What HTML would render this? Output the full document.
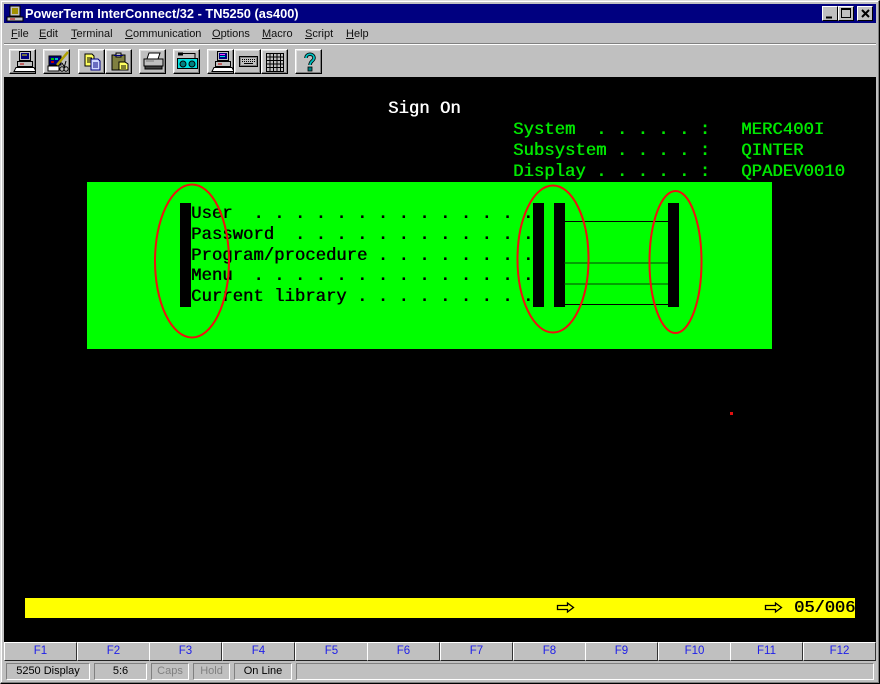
<!DOCTYPE html>
<html>
<head>
<meta charset="utf-8">
<style>
html,body{margin:0;padding:0}
body{width:880px;height:684px;overflow:hidden;background:#c0c0c0;position:relative;font-family:"Liberation Sans",sans-serif}
div{position:absolute;box-sizing:border-box}
.t{font-family:"Liberation Mono",monospace;font-size:17.3px;line-height:20px;white-space:pre;font-weight:normal}
.g{color:#00e800;text-shadow:.5px 0 0 #00e800}
.k{color:#000;text-shadow:.5px 0 0 #000}
.m{font-size:11px;line-height:14px;top:27px;color:#111;white-space:pre}
.b{top:49px;height:25px;background:#c0c0c0;border:1px solid;border-color:#fff #000 #000 #fff;box-shadow:inset -1px -1px 0 #808080,inset 1px 1px 0 #dfdfdf}
.b svg{position:absolute;left:1px;top:0}
.f{top:642px;height:19px;width:73px;background:#c0c0c0;border:1px solid;border-color:#fff #333 #222 #fff;color:#2020e8;font-size:11.5px;line-height:17px;text-align:center}
.s{top:663px;height:17px;border:1px solid;border-color:#808080 #fff #fff #808080;font-size:11px;line-height:15px;text-align:center;color:#000;white-space:pre;background:#c0c0c0}
.w{top:6px;width:16px;height:15px;background:#c0c0c0;border:1px solid;border-color:#fff #000 #000 #fff}
</style>
</head>
<body>
<div style="left:0;top:0;width:880px;height:684px;border:1px solid;border-color:#dfdfdf #000 #000 #dfdfdf;box-shadow:inset -1px -1px 0 #808080,inset 1px 1px 0 #fff"></div>

<div style="left:4px;top:4px;width:872px;height:19px;background:#000080"></div>
<svg style="position:absolute;left:6px;top:5px" width="18" height="17" viewBox="0 0 18 17"><path d="M4 1h10v10H4z" fill="#c0c0c0" stroke="#000"/><path d="M6 3h6v6H6z" fill="#a09000"/><path d="M1 12h16v4H1z" fill="#c0c0c0" stroke="#000"/><path d="M4 14h5" stroke="#c00000"/></svg>
<div style="left:25px;top:5px;color:#fff;font-weight:bold;font-size:12.8px;line-height:17px;white-space:pre">PowerTerm InterConnect/32 - TN5250 (as400)</div>
<div class="w" style="left:822px"><svg style="position:absolute;left:3px;top:2px" width="10" height="10"><path d="M0 8.500h6" stroke="#000" stroke-width="2"/></svg></div>
<div class="w" style="left:838px"><svg style="position:absolute;left:2px;top:1px" width="11" height="11"><path d="M.5.5h9v9h-9zM.5 1.500h9" fill="none" stroke="#000"/></svg></div>
<div class="w" style="left:857px"><svg style="position:absolute;left:3px;top:2px" width="10" height="10"><path d="M1 1l7 7M8 1l-7 7" stroke="#000" stroke-width="2"/></svg></div>

<div class="m" style="left:11px"><u>F</u>ile</div>
<div class="m" style="left:39px"><u>E</u>dit</div>
<div class="m" style="left:71px"><u>T</u>erminal</div>
<div class="m" style="left:125px"><u>C</u>ommunication</div>
<div class="m" style="left:212px"><u>O</u>ptions</div>
<div class="m" style="left:262px"><u>M</u>acro</div>
<div class="m" style="left:305px"><u>S</u>cript</div>
<div class="m" style="left:346px"><u>H</u>elp</div>
<div style="left:4px;top:43px;width:872px;height:1px;background:#808080"></div>
<div style="left:4px;top:44px;width:872px;height:1px;background:#fff"></div>

<div class="b" style="left:9px;width:27px"><svg width="25" height="23" viewBox="0 0 25 23"><path d="M8.500 1.500h11v9h-11z" fill="#c0c0c0" stroke="#000"/><path d="M10 3h8v6h-8z" fill="#000080"/><path d="M11 5h5" stroke="#e0e000"/><path d="M6.500 11.500h15v5h-15z" fill="#c0c0c0" stroke="#000"/><path d="M9 14h4" stroke="#c00000"/><path d="M3 21.500l2-4h18l2 4z" fill="#fff" stroke="#000"/></svg></div>
<div class="b" style="left:43px;width:27px"><svg width="25" height="23" viewBox="0 0 25 23"><path d="M4 6h12v9H4z" fill="#000080" stroke="#000"/><path d="M6 8h3v2H6z" fill="#00c000"/><path d="M10 8h3v2h-3z" fill="#00c0c0"/><path d="M6 11h3v2H6z" fill="#c00000"/><path d="M3 16h11v5H3z" fill="#fff" stroke="#000"/><path d="M12 15L23 2" stroke="#b0a000" stroke-width="2.500"/><path d="M17 13l3 5M21 11l-2 7" stroke="#000"/><circle cx="17" cy="19" r="2.200" fill="none" stroke="#000"/><circle cx="21" cy="19" r="2.200" fill="none" stroke="#000"/></svg></div>
<div class="b" style="left:78px;width:27px"><svg width="25" height="23" viewBox="0 0 25 23"><path d="M5 4h7l2 2v10H5z" fill="#ffff60" stroke="#000"/><path d="M7 8h5M7 10h5M7 12h5" stroke="#000"/><path d="M11 9h7l2 2v9h-9z" fill="#d0d8ff" stroke="#000080"/><path d="M13 13h5M13 15h5M13 17h5" stroke="#000080"/></svg></div>
<div class="b" style="left:105px;width:27px"><svg width="25" height="23" viewBox="0 0 25 23"><path d="M5 5h13v15H5z" fill="#808040" stroke="#000"/><path d="M9 3h5v4H9z" fill="#c0c0c0" stroke="#000"/><path d="M7 5.500h9" stroke="#000080"/><path d="M12 12h6l3 2v6h-9z" fill="#ffff60" stroke="#000"/><path d="M14 16h5M14 18h5" stroke="#000"/></svg></div>
<div class="b" style="left:139px;width:27px"><svg width="25" height="23" viewBox="0 0 25 23"><path d="M8 3h11l-2 6H6z" fill="#fff" stroke="#000"/><path d="M3 9h19v7H3z" fill="#c0c0c0" stroke="#000"/><path d="M5 11h8" stroke="#808080"/><path d="M4 16h17v3H4z" fill="#404040" stroke="#000"/></svg></div>
<div class="b" style="left:173px;width:27px"><svg width="25" height="23" viewBox="0 0 25 23"><path d="M2.500 8.500h20v10h-20z" fill="#00e0e0" stroke="#000"/><circle cx="8" cy="14" r="3" fill="#008080" stroke="#000"/><circle cx="17" cy="14" r="3" fill="#008080" stroke="#000"/><path d="M3 4h5" stroke="#000" stroke-width="3"/><path d="M8 3.500h12v5" fill="none" stroke="#000"/></svg></div>
<div class="b" style="left:207px;width:27px"><svg width="25" height="23" viewBox="0 0 25 23"><path d="M8.500 1.500h11v9h-11z" fill="#c0c0c0" stroke="#000"/><path d="M10 3h8v6h-8z" fill="#000080"/><path d="M11 4.500h5" stroke="#ff40ff"/><path d="M11 6.500h5" stroke="#00e0e0"/><path d="M6.500 11.500h15v5h-15z" fill="#c0c0c0" stroke="#000"/><path d="M9 14h4" stroke="#c00000"/><path d="M3 21.500l2-4h18l2 4z" fill="#fff" stroke="#000"/></svg></div>
<div class="b" style="left:234px;width:27px"><svg width="25" height="23" viewBox="0 0 25 23"><path d="M3.500 6.500h18v10h-18z" fill="#808080" stroke="#000"/><path d="M5 8h15v7H5z" fill="#c0c0c0"/><path d="M6 9.500h13M6 11.500h13" stroke="#000" stroke-dasharray="1 1"/><path d="M8 13.500h9" stroke="#000"/></svg></div>
<div class="b" style="left:261px;width:27px"><svg width="25" height="23" viewBox="0 0 25 23"><path d="M3.500 3.500h17v18h-17zM3.500 7h17M3.500 10.500h17M3.500 14h17M3.500 17.500h17M7 3.500v18M10.500 3.500v18M14 3.500v18M17.500 3.500v18" fill="#c0c0c0" stroke="#000"/></svg></div>
<div class="b" style="left:295px;width:27px"><svg width="25" height="23" viewBox="0 0 25 23"><path d="M9 8c0-5 8-5 8 0 0 3-4 3-4 7" fill="none" stroke="#000" stroke-width="3.400"/><path d="M9 8c0-5 8-5 8 0 0 3-4 3-4 7" fill="none" stroke="#00c0c0" stroke-width="1.800"/><rect x="11" y="17" width="4" height="4" fill="#008080" stroke="#000" stroke-width=".8"/></svg></div>

<div style="left:4px;top:77px;width:872px;height:565px;background:#000"></div>
<div style="left:87px;top:182px;width:685px;height:167px;background:#00ff00"></div>
<div style="left:25px;top:598px;width:830px;height:20px;background:#ffff00"></div>

<div class="t" style="left:388px;top:100px;color:#fff;text-shadow:.5px 0 0 #fff">Sign On</div>
<div class="t g" style="left:513px;top:121px">System  . . . . . :   MERC400I</div>
<div class="t g" style="left:513px;top:142px">Subsystem . . . . :   QINTER</div>
<div class="t g" style="left:513px;top:163px">Display . . . . . :   QPADEV0010</div>

<div class="t k" style="left:191px;top:205px">User  . . . . . . . . . . . . . .</div>
<div class="t k" style="left:191px;top:226px">Password  . . . . . . . . . . . .</div>
<div class="t k" style="left:191px;top:247px">Program/procedure . . . . . . . .</div>
<div class="t k" style="left:191px;top:267px">Menu  . . . . . . . . . . . . . .</div>
<div class="t k" style="left:191px;top:288px">Current library . . . . . . . . .</div>

<div style="left:180px;top:203px;width:11px;height:104px;background:#000"></div>
<div style="left:533px;top:203px;width:11px;height:104px;background:#000"></div>
<div style="left:554px;top:203px;width:11px;height:104px;background:#000"></div>
<div style="left:668px;top:203px;width:11px;height:104px;background:#000"></div>

<svg style="position:absolute;left:0;top:0" width="880" height="684">
<path d="M564 221.500h104M564 304.500h104" stroke="#000"/>
<path d="M564 263h104M564 284h104" stroke="#064006"/>
<ellipse cx="192" cy="261" rx="37" ry="76.500" fill="none" stroke="#f01010" stroke-width="2"/>
<ellipse cx="553" cy="259" rx="35.500" ry="73.500" fill="none" stroke="#f01010" stroke-width="2"/>
<ellipse cx="675.500" cy="262" rx="26" ry="71" fill="none" stroke="#f01010" stroke-width="2"/>
<rect x="730" y="412" width="3" height="3" fill="#e01010"/>
<path d="M557.500 605.500h10v-2.500l6 4.500-6 4.500v-2.500h-10z" fill="none" stroke="#000" stroke-width="1.300"/>
<path d="M765.500 605.500h10v-2.500l6 4.500-6 4.500v-2.500h-10z" fill="none" stroke="#000" stroke-width="1.300"/>
</svg>
<div class="t k" style="left:794px;top:599px;font-size:17px">05/006</div>

<div class="f" style="left:4px">F1</div>
<div class="f" style="left:77px">F2</div>
<div class="f" style="left:149px">F3</div>
<div class="f" style="left:222px">F4</div>
<div class="f" style="left:295px">F5</div>
<div class="f" style="left:367px">F6</div>
<div class="f" style="left:440px">F7</div>
<div class="f" style="left:513px">F8</div>
<div class="f" style="left:585px">F9</div>
<div class="f" style="left:658px">F10</div>
<div class="f" style="left:730px">F11</div>
<div class="f" style="left:803px;width:73px">F12</div>

<div class="s" style="left:6px;width:84px">5250 Display</div>
<div class="s" style="left:94px;width:53px">5:6</div>
<div class="s" style="left:151px;width:38px;color:#808080">Caps</div>
<div class="s" style="left:193px;width:37px;color:#808080">Hold</div>
<div class="s" style="left:234px;width:58px">On Line</div>
<div class="s" style="left:296px;width:578px"></div>
</body>
</html>
